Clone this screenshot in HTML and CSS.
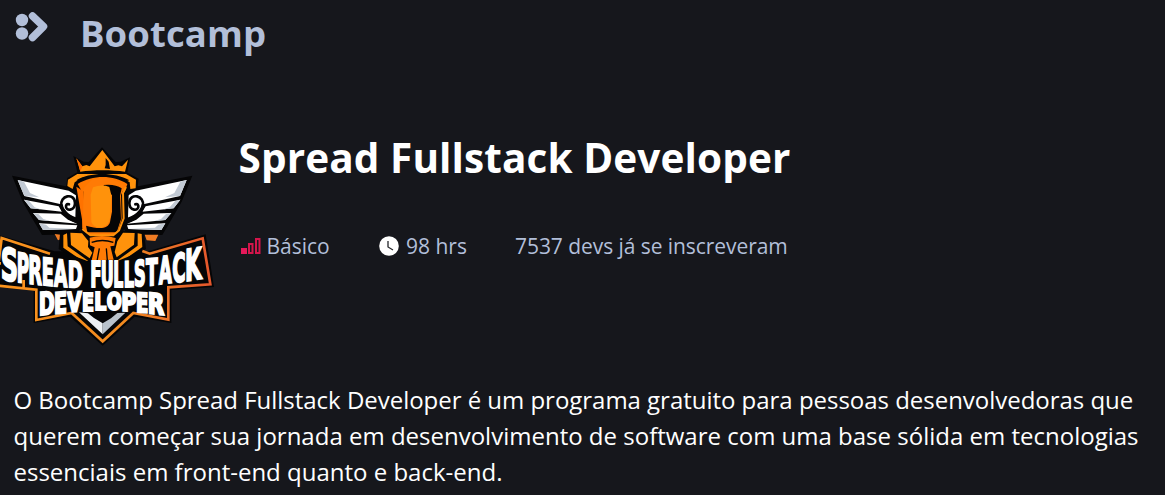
FILE: index.html
```html
<!DOCTYPE html>
<html lang="pt">
<head><meta charset="utf-8"><title>Bootcamp</title><link rel="stylesheet" href="styles.css"></head>
<body>
<header class="top">
<svg class="mark" width="34" height="32" viewBox="14 11 34 32"><circle cx="22" cy="20" r="6.2"/><circle cx="22" cy="33.500" r="6.2"/><path d="M32.500 16 43.500 26.500 32.500 37.500"/></svg>
<h2 class="kicker">Bootcamp</h2>
</header>
<main>
<section class="hero">
<div class="badge">
<svg class="crest" width="216" height="205" viewBox="0 0 648 615">
<defs>
<linearGradient id="edge"><stop offset="0" stop-color="#fb931c"/><stop offset=".6" stop-color="#f28a20"/><stop offset="1" stop-color="#e4572c"/></linearGradient>
<g id="wing">
<path fill="#050506" d="M36 92 198 124 240 130 248 240 232 268 126 270 92 212 68 170Z"/>
<path fill="#fff" d="M53 105 206 137 230 152 233 222 205 208 186 184 180 177 73 153Z"/>
<path fill="#fff" d="M72 164 176 184 186 200 92 190ZM99 204 182 206 204 224 232 236 117 225ZM117 235 232 241 228 252 129 255Z"/>
<path fill="#c2cad4" d="M53 105 72 110 90 144 118 157 73 153ZM72 164 88 169 104 187 122 193 92 190ZM99 204 115 207 130 222 150 228 117 225ZM117 235 138 239 148 248 230 252 129 255Z"/>
<path fill="none" stroke="#050506" stroke-width="8" stroke-linecap="round" d="M184 184C178 150 224 142 225 174 225 198 196 200 198 183Q200 175 207 178"/>
<path fill="#050506" d="M178 178 188 178C192 198 210 214 240 221L240 238C208 230 184 212 178 178Z"/>
</g>
</defs>
<use href="#wing"/><use href="#wing" transform="matrix(-1 0 0 1 613 0)"/>
<path fill="#ef7b23" d="M164 267 182 269 184 282 174 286ZM434 269 475 269 466 288 440 286Z"/>
<!-- cup -->
<path fill="#050506" d="M220 33 251 50 266 51 306 7 347 51 362 50 390 37 382 83 416 101 412 132 386 148 384 220 370 258 432 263 438 312 350 372 262 372 176 312 180 266 244 258 226 220 228 148 198 130 202 99 232 82Z"/>
<path fill="#ff920b" d="M204 104 232 87 378 87 408 104 407 130 391 132 389 112 366 98C324 86 286 86 247 98L224 112 218 132 202 123Z"/>
<path fill="#050506" d="M229 106C270 81 343 81 388 106L368 112C324 96 288 96 244 112Z"/>
<path fill="#ff920b" d="M229 40 247 64 259 60 269 64 307 15 344 64 355 61 366 64 384 44 375 80C335 74 281 74 241 80Z"/>
<path fill="#ff6a00" d="M229 40 247 64 241 80 235 56Z"/>
<path fill="#050506" d="M317 39 326 50 330 72 314 70 317 60Z"/>
<path fill="#ff7800" d="M233 117C278 89 340 89 382 117L374 142C360 120 338 117 310 118 280 119 257 128 248 143Z"/>
<path fill="#ff7200" d="M229 125 251 139 255 245 262 253 247 251 246 223Z"/>
<path fill="#ff7b05" d="M251 129 275 105C304 94 344 101 376 123L363 150 365 222 356 252 344 270 268 270 248 249Z"/>
<path fill="#050506" d="M310 120Q345 116 365 130L360 153 363 223 350 262 262 262 258 242C302 255 325 250 330 231L336 200 336 151Z"/>
<path fill="#ff920b" d="M279 127Q306 117 328 126L334 151 331 215Q328 243 304 248 279 248 274 231L272 149Z"/>
<path fill="none" stroke="#ff920b" stroke-width="6" d="M378 126 369 144 371 220 357 256 340 271 271 271 247 252"/>
<path fill="#ff920b" d="M190 270 201 265 203 304 264 347 252 351 190 308ZM211 263 246 265 265 288 264 306 277 323 269 340 213 300ZM369 263 404 264 402 299 350 337 344 321 352 289ZM413 265 425 267 427 306 366 349 353 346 413 302Z"/>
<path fill="#ff7b05" d="M269 278Q307 267 347 279L343 302 331 304 341 344 275 346 284 307 270 301Z"/>
<path fill="none" stroke="#050506" stroke-width="4" d="M275 292Q307 281 340 292M298 310 291 348M319 310 322 346"/>
<path fill="#fff" d="M178 336 194 325 208 337ZM412 337 421 325 440 333Z"/>
<!-- banner -->
<path fill="#050506" d="M-4 270 164 319 185 319 268 350 347 350 427 318 444 319 617 268 642 426 514 435 514 534 404 515 308 602 210 515 101 534 101 437-4 426Z"/>
<path fill="none" stroke="url(#edge)" stroke-width="8" stroke-linejoin="miter" d="M-8 355 3 355M150 326 5 279-4 350M-4 422 109 434 109 525 215 504 308 589 400 504 505 524 505 427 631 418 608 280 449 326 427 318M71 405 71 428"/>
<path fill="#eef1f4" d="M237 502 264 505 282 519 308 535 308 568Z"/><path fill="#b9c2cb" d="M308 535 333 520 352 504 376 503 308 568Z"/>
<g class="lettering">
<text transform="translate(2 402) skewY(10)" font-size="133" textLength="52" lengthAdjust="spacingAndGlyphs">S</text>
<text transform="translate(50 410) skewY(9)" font-size="122" textLength="37" lengthAdjust="spacingAndGlyphs">P</text>
<text transform="translate(85 415) skewY(7)" font-size="117" textLength="41" lengthAdjust="spacingAndGlyphs">R</text>
<text transform="translate(125 419) skewY(6)" font-size="113" textLength="36" lengthAdjust="spacingAndGlyphs">E</text>
<text transform="translate(162 423) skewY(4)" font-size="110" textLength="40" lengthAdjust="spacingAndGlyphs">A</text>
<text transform="translate(203 426) skewY(2)" font-size="107" textLength="45" lengthAdjust="spacingAndGlyphs">D</text>
<text transform="translate(271 427)" font-size="106" textLength="34" lengthAdjust="spacingAndGlyphs">F</text>
<text transform="translate(302 427)" font-size="106" textLength="39" lengthAdjust="spacingAndGlyphs">U</text>
<text transform="translate(340 427)" font-size="105" textLength="30" lengthAdjust="spacingAndGlyphs">L</text>
<text transform="translate(371 426) skewY(-2)" font-size="105" textLength="31" lengthAdjust="spacingAndGlyphs">L</text>
<text transform="translate(402 424) skewY(-4)" font-size="106" textLength="35" lengthAdjust="spacingAndGlyphs">S</text>
<text transform="translate(438 422) skewY(-5)" font-size="110" textLength="35" lengthAdjust="spacingAndGlyphs">T</text>
<text transform="translate(476 418) skewY(-7)" font-size="113" textLength="39" lengthAdjust="spacingAndGlyphs">A</text>
<text transform="translate(517 413) skewY(-8)" font-size="118" textLength="40" lengthAdjust="spacingAndGlyphs">C</text>
<text transform="translate(555 409) skewY(-9)" font-size="130" textLength="50" lengthAdjust="spacingAndGlyphs">K</text>
<text transform="translate(116 511) skewY(-5)" font-size="94" textLength="48" lengthAdjust="spacingAndGlyphs">D</text>
<text transform="translate(162 506) skewY(-5)" font-size="87" textLength="39" lengthAdjust="spacingAndGlyphs">E</text>
<text transform="translate(202 501) skewY(-3)" font-size="81" textLength="43" lengthAdjust="spacingAndGlyphs">V</text>
<text transform="translate(246 497)" font-size="75" textLength="36" lengthAdjust="spacingAndGlyphs">E</text>
<text transform="translate(283 496)" font-size="74" textLength="36" lengthAdjust="spacingAndGlyphs">L</text>
<text transform="translate(320 496)" font-size="74" textLength="45" lengthAdjust="spacingAndGlyphs">O</text>
<text transform="translate(364 497) skewY(2)" font-size="76" textLength="45" lengthAdjust="spacingAndGlyphs">P</text>
<text transform="translate(408 501) skewY(4)" font-size="81" textLength="37" lengthAdjust="spacingAndGlyphs">E</text>
<text transform="translate(443 505) skewY(6)" font-size="86" textLength="50" lengthAdjust="spacingAndGlyphs">R</text>
</g>
</svg>
</div>
<div class="info">
<h1 class="title">Spread Fullstack Developer</h1>
<div class="meta">
<span class="level"><svg class="bars" width="20" height="18" viewBox="0 0 20 18"><path fill="#e5195a" d="M0 11h6v6H0z"/><path fill="none" stroke="#d5154b" stroke-width="2" d="M8 7h3.500v9H8zM15 2h3.500v14H15z"/></svg>Básico</span>
<span class="hours"><svg class="clock" width="20" height="20" viewBox="0 0 20 20"><circle cx="10" cy="10" r="9.800" fill="#fff"/><path fill="none" stroke="#26272b" stroke-width="1.300" d="M9 5v6l5 3"/></svg>98 hrs</span>
<span class="devs">7537 devs já se inscreveram</span>
</div>
</div>
</section>
<p class="about"><span class="lead">O Bootcamp Spread Fullstack Developer é um programa gratuito para pessoas desenvolvedoras que</span> querem começar sua jornada em desenvolvimento de software com uma base sólida em tecnologias essenciais em front-end quanto e back-end.</p>
</main>
</body>
</html>
```
FILE: styles.css
```css
*{box-sizing:border-box;margin:0}
body{background:#16171c;color:#fff;font-family:"Open Sans",sans-serif;height:495px;overflow:hidden}
.top{display:flex;padding:11px 14px 0;height:124px;gap:32px}
.mark{fill:#b2bfd9;flex:none}
.mark path{fill:none;stroke:#b2bfd9;stroke-width:7.5;stroke-linecap:round;stroke-linejoin:round}
.kicker{font-size:36.500px;line-height:44px;font-weight:700;color:#b2bfd9;letter-spacing:.1px}
.hero{display:flex;height:258px}
.badge{width:238.500px;padding-top:21px;flex:none}
.crest{display:block}
.lettering{font-family:"DejaVu Sans Condensed","DejaVu Sans",sans-serif;font-weight:700;fill:#fff;stroke:#fff;stroke-width:6}
.title{font-size:40.500px;line-height:68px;letter-spacing:.1px}
.meta{display:flex;font-size:21px;line-height:30px;padding-top:39px;color:#b2bfd9}
.level,.hours{display:flex;align-items:center}
.level{width:140.500px;padding-left:2px;gap:6px}
.hours{width:136px;gap:7px}
.devs{letter-spacing:-.06px}
.about{font-size:24px;line-height:36px;padding-left:13.500px;width:1150px}
.lead{letter-spacing:-.025px}
```
